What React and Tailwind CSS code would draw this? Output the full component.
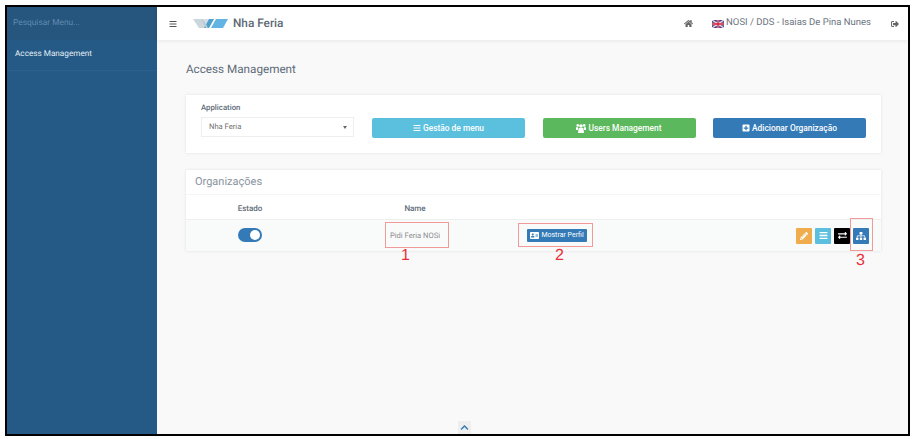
import { FaBars, FaPlusSquare, FaHome, FaSignOutAlt, FaAddressCard, FaPencilAlt, FaExchangeAlt, FaSitemap, FaChevronUp } from 'react-icons/fa';

function TopButton({ color, icon, label }) {
  return (
    <button className={`w-[153px] h-[20px] rounded-[2px] flex items-center justify-center gap-[2px] text-white text-[8.4px] font-medium ${color}`}>
      {icon}
      {label}
    </button>
  );
}

function ActionButton({ color, children }) {
  return (
    <button className={`w-[16px] h-[16px] rounded-[1px] flex items-center justify-center text-white text-[9px] ${color}`}>
      {children}
    </button>
  );
}

function Flag() {
  return (
    <svg width="12" height="8" viewBox="0 0 12 8" className="block">
      <rect width="12" height="8" fill="#3a3f8f" />
      <path d="M0 0L12 8M12 0L0 8" stroke="#f3d5dc" strokeWidth="1.4" />
      <path d="M6 0V8M0 4H12" stroke="#f3d5dc" strokeWidth="2.4" />
      <path d="M6 0V8M0 4H12" stroke="#d0213a" strokeWidth="1.3" />
    </svg>
  );
}

function UsersIcon() {
  return (
    <svg width="10" height="9" viewBox="0 0 10 9" fill="currentColor">
      <circle cx="1.8" cy="1.4" r="1.3" />
      <circle cx="8.2" cy="1.4" r="1.3" />
      <circle cx="5" cy="2" r="1.8" />
      <path d="M0 3.2H2L2 6H0Z" />
      <path d="M8 3.2H10V6H8Z" />
      <path d="M2.6 4H7.4L8 9H2Z" />
    </svg>
  );
}

function Logo() {
  return (
    <svg width="35" height="9" viewBox="0 0 35 9" className="block">
      <path d="M0 0H10L15 9H6Z" fill="#cbd6dd" />
      <path d="M9 0H16L13 5Z" fill="#cbd6dd" opacity="0.8" />
      <path d="M11 9L16 0H21L16 9Z" fill="#4f9fcf" />
      <path d="M8 0L13 9H15L12 3Z" fill="#b8cbd7" />
      <path d="M18 9L23 0H35L30 9Z" fill="#63b3e3" />
    </svg>
  );
}

export default function App() {
  return (
    <div className="w-[915px] h-[439px] bg-white pl-[5px] pt-[5px] font-['Roboto',sans-serif] relative [text-rendering:geometricPrecision]">
      <div className="w-[905px] h-[431px] border-2 border-black flex overflow-hidden">
        {/* sidebar */}
        <div className="w-[150px] shrink-0 bg-[#255a87]">
          <div className="h-[33px] bg-[#26557e] flex items-center pl-[6px] text-[8.4px] text-[#5f8cb0]">Pesquisar Menu...</div>
          <div className="h-[31px] pl-[8px] pt-[8px] text-[8.2px] text-[#e4edf3] border-b border-[#28608f]">Access Management</div>
        </div>

        <div className="flex-1 bg-[#f9f9f9] relative">
          {/* top bar */}
          <div className="h-[33px] bg-white shadow-[0_1px_4px_rgba(0,0,0,0.08)] flex items-center pl-[12px] pr-[9px] text-[#6b7580]">
            <FaBars className="text-[8px] text-[#555]" />
            <div className="ml-[16px]"><Logo /></div>
            <span className="ml-[5px] text-[11.8px] font-medium text-[#5d6975]">Nha Feria</span>
            <div className="ml-auto flex items-center text-[9.5px]">
              <FaHome className="text-[9px] text-[#666]" />
              <span className="ml-[19px]"><Flag /></span>
              <span className="ml-[2px]">NOSI / DDS - Isaias De Pina Nunes</span>
              <FaSignOutAlt className="ml-[20px] text-[8px] text-[#666]" />
            </div>
          </div>

          <div className="pl-[29px] pr-[27px]">
            <h1 className="pt-[21px] text-[11.7px] leading-[16px] text-[#5e6b78]">Access Management</h1>

            {/* application card */}
            <div className="mt-[18px] h-[58px] bg-white shadow-[0_0_3px_rgba(0,0,0,0.1)] pl-[15px] flex">
              <div className="w-[153px] pt-[8px]">
                <div className="text-[7.8px] leading-[10px] font-medium text-[#5e6b78]">Application</div>
                <div className="mt-[4px] h-[20px] border border-[#eeeeee] flex items-center justify-between pl-[7px] pr-[6px] text-[7.6px] text-[#6f6f6f]">
                  Nha Feria
                  <span className="border-x-[2.5px] border-t-[3px] border-x-transparent border-t-[#666]" />
                </div>
              </div>
              <div className="ml-[18px] mt-[23px] flex gap-[17.5px]">
                <TopButton color="bg-[#5bc0de]" icon={<FaBars className="text-[8px]" />} label="Gestão de menu" />
                <TopButton color="bg-[#5cb85c]" icon={<UsersIcon />} label="Users Management" />
                <TopButton color="bg-[#337ab7]" icon={<FaPlusSquare className="text-[8px]" />} label="Adicionar Organização" />
              </div>
            </div>

            {/* organizations card */}
            <div className="mt-[17px] bg-white shadow-[0_0_3px_rgba(0,0,0,0.1)]">
              <div className="h-[25px] pl-[9px] pt-[1px] flex items-center text-[11px] text-[#8a949e] border-b border-[#f5f5f5]">Organizações</div>
              <div className="h-[25px] pt-[3px] flex items-center text-[8px] font-medium text-[#5e6b78] border-b border-[#eef0f0]">
                <div className="w-[128px] text-center">Estado</div>
                <div className="w-[202px] text-center">Name</div>
              </div>
              <div className="h-[31px] flex items-center bg-[#f9fbfb]">
                <div className="w-[128px] flex justify-center pb-[2px]">
                  <div className="w-[24px] h-[14px] rounded-full bg-[#337ab7] flex items-center justify-end pr-[2px]">
                    <div className="w-[10px] h-[10px] rounded-full bg-white" />
                  </div>
                </div>
                <div className="w-[202px] text-center text-[7.6px] text-[#8d8d8d]">Pidi Feria NOSi</div>
                <button className="ml-[11px] w-[60px] h-[13px] rounded-[1px] bg-[#337ab7] text-white text-[7px] flex items-center justify-center gap-[2px]">
                  <FaAddressCard className="text-[9px]" />
                  Mostrar Perfil
                </button>
                <div className="ml-auto pr-[12px] flex gap-[3px]">
                  <ActionButton color="bg-[#f0ad4e]"><FaPencilAlt className="text-[8px]" /></ActionButton>
                  <ActionButton color="bg-[#5bc0de]"><FaBars /></ActionButton>
                  <ActionButton color="bg-black"><FaExchangeAlt className="text-[9px]" /></ActionButton>
                  <ActionButton color="bg-[#337ab7]"><FaSitemap className="text-[10px]" /></ActionButton>
                </div>
              </div>
            </div>
          </div>

          {/* scroll to top */}
          <div className="absolute left-[301px] bottom-0 w-[13px] h-[13px] bg-[#eeeeee] flex items-center justify-center text-[#337ab7] text-[9px]">
            <FaChevronUp />
          </div>
        </div>
      </div>

      {/* red annotations */}
      <div className="absolute left-[385px] top-[222px] w-[64px] h-[26px] border border-[#f29a9a]" />
      <div className="absolute left-[518px] top-[223px] w-[75px] h-[24px] border border-[#f29a9a]" />
      <div className="absolute left-[850px] top-[218px] w-[23px] h-[33px] border border-[#f29a9a]" />
      <span className="absolute left-[401px] top-[247px] text-[16px] leading-[18px] text-[#e8303a] font-['Liberation_Sans',sans-serif]">1</span>
      <span className="absolute left-[555px] top-[247px] text-[16px] leading-[18px] text-[#e8303a] font-['Liberation_Sans',sans-serif]">2</span>
      <span className="absolute left-[856px] top-[252px] text-[16px] leading-[18px] text-[#e8303a] font-['Liberation_Sans',sans-serif]">3</span>
    </div>
  );
}
